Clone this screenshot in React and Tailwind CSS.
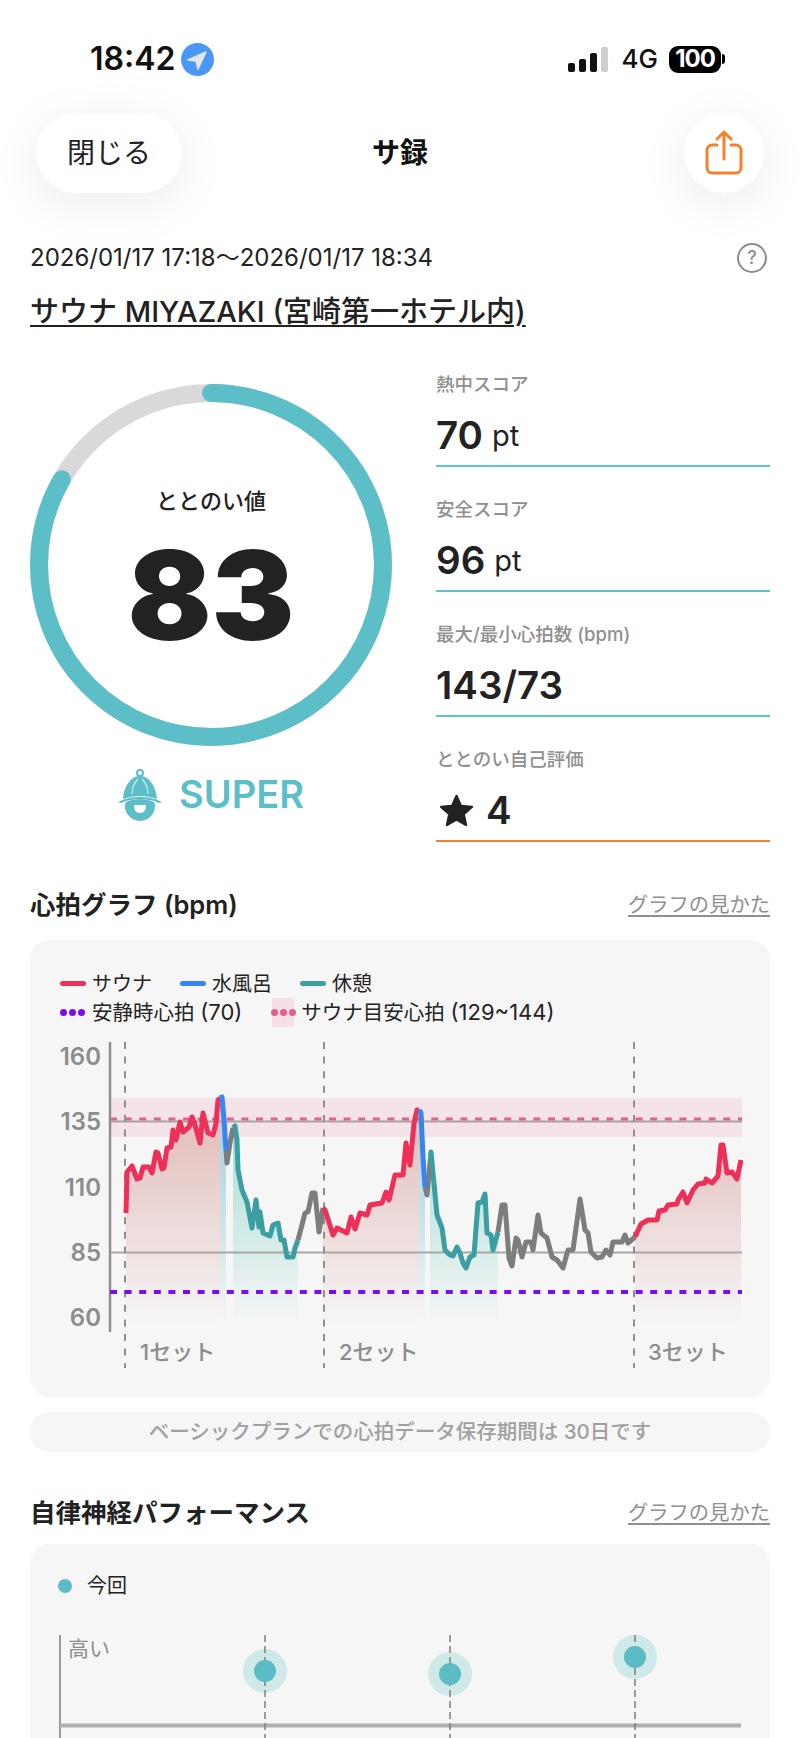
import React from 'react';

const P = {
  red1: [[126,1213],[127,1172],[132,1166],[137,1179],[140,1178],[143,1167],[149,1167],[152,1173],[156,1152],[158,1153],[162,1169],[164,1168],[167,1148],[171,1147],[173,1130],[176,1140],[180,1122],[183,1132],[189,1127],[192,1117],[195,1125],[200,1143],[203,1113],[208,1133],[213,1135],[216,1123],[218,1100],[220,1098]],
  blue1: [[220,1098],[222,1097],[224,1120],[226,1150]],
  gray1: [[226,1150],[227,1163],[230,1143],[233,1128]],
  teal1: [[233,1128],[235,1126],[237,1140],[238,1170],[242,1190],[247,1202],[252,1228],[256,1200],[259,1227],[260,1212],[263,1233],[270,1236],[273,1225],[278,1223],[281,1240],[284,1240],[287,1257],[293,1257],[295,1248],[298,1240]],
  gray2: [[298,1240],[302,1225],[305,1213],[308,1212],[312,1193],[315,1193],[319,1232],[323,1208]],
  red2: [[323,1208],[325,1210],[333,1235],[337,1228],[347,1233],[351,1217],[355,1229],[360,1213],[367,1215],[370,1205],[382,1203],[386,1192],[389,1200],[395,1175],[403,1175],[406,1143],[410,1165],[414,1123],[417,1110],[419,1110]],
  blue2: [[419,1110],[421,1113],[423,1157],[425,1187]],
  gray3: [[425,1187],[427,1195],[430,1163]],
  teal2: [[430,1163],[431,1152],[437,1215],[442,1228],[445,1250],[450,1255],[453,1256],[457,1247],[460,1253],[463,1263],[466,1268],[470,1257],[474,1255],[478,1203],[482,1202],[485,1194],[487,1233],[491,1235],[493,1250],[498,1232]],
  gray4: [[498,1232],[502,1205],[505,1205],[509,1258],[512,1266],[516,1238],[518,1240],[522,1257],[526,1242],[531,1242],[533,1250],[538,1215],[541,1233],[547,1238],[552,1257],[557,1260],[563,1268],[568,1250],[573,1250],[580,1199],[585,1230],[588,1233],[591,1252],[597,1258],[602,1257],[606,1250],[610,1255],[613,1242],[622,1242],[625,1235],[628,1243],[635,1237]],
  red3: [[635,1237],[641,1224],[648,1220],[657,1220],[659,1211],[665,1210],[668,1205],[677,1204],[678,1200],[683,1192],[687,1203],[693,1190],[698,1184],[705,1183],[706,1179],[712,1183],[718,1176],[721,1145],[723,1145],[727,1173],[732,1172],[737,1179],[741,1160]],
};

const toLine = (pts) => pts.map((p) => p.join(',')).join(' ');
const toArea = (pts, bottom = 1325) => `${pts[0][0]},${bottom} ${toLine(pts)} ${pts[pts.length - 1][0]},${bottom}`;

function HeartChart() {
  const labels = [['160', 1065], ['135', 1130], ['110', 1196], ['85', 1261], ['60', 1326]];
  return (
    <svg viewBox="30 1030 740 345" className="block w-[740px] h-[345px] mt-[3px]">
      <defs>
        <linearGradient id="redFill" gradientUnits="userSpaceOnUse" x1="0" y1="1100" x2="0" y2="1325">
          <stop offset="0" stopColor="#dba9a6" stopOpacity="0.8" />
          <stop offset="1" stopColor="#dba9a6" stopOpacity="0" />
        </linearGradient>
        <linearGradient id="tealFill" gradientUnits="userSpaceOnUse" x1="0" y1="1130" x2="0" y2="1325">
          <stop offset="0" stopColor="#a6dcd5" stopOpacity="0.95" />
          <stop offset="1" stopColor="#a6dcd5" stopOpacity="0" />
        </linearGradient>
        <linearGradient id="blueFill" gradientUnits="userSpaceOnUse" x1="0" y1="1100" x2="0" y2="1325">
          <stop offset="0" stopColor="#9ccfdf" stopOpacity="1" />
          <stop offset="1" stopColor="#9ccfdf" stopOpacity="0" />
        </linearGradient>
      </defs>

      <polygon points={toArea(P.red1)} fill="url(#redFill)" />
      <polygon points={toArea(P.red2)} fill="url(#redFill)" />
      <polygon points={toArea(P.red3)} fill="url(#redFill)" />
      <polygon points={toArea(P.blue1)} fill="url(#blueFill)" />
      <polygon points={toArea(P.blue2)} fill="url(#blueFill)" />
      <polygon points={toArea(P.teal1)} fill="url(#tealFill)" />
      <polygon points={toArea(P.teal2)} fill="url(#tealFill)" />

      <rect x="110" y="1098" width="632" height="39" fill="#f0c5d2" fillOpacity="0.36" />
      <line x1="110" x2="742" y1="1121.5" y2="1121.5" stroke="#a3a3a3" strokeWidth="2" />
      <line x1="110" x2="742" y1="1252.5" y2="1252.5" stroke="#a8a8a8" strokeWidth="2" />
      <line x1="110" x2="742" y1="1119" y2="1119" stroke="#e4608c" strokeWidth="3" strokeDasharray="7 7.6" />
      <line x1="110" x2="110" y1="1042" y2="1332" stroke="#8f8f8f" strokeWidth="2.5" />

      {[125, 324, 634].map((x) => (
        <line key={x} x1={x} x2={x} y1="1042" y2="1368" stroke="#8f8f8f" strokeWidth="2" strokeDasharray="7 7.6" />
      ))}

      <g fill="none" strokeWidth="5" strokeLinejoin="round" strokeLinecap="butt">
        <polyline points={toLine(P.gray1)} stroke="#7d7d7d" />
        <polyline points={toLine(P.gray2)} stroke="#7d7d7d" />
        <polyline points={toLine(P.gray3)} stroke="#7d7d7d" />
        <polyline points={toLine(P.gray4)} stroke="#7d7d7d" />
        <polyline points={toLine(P.teal1)} stroke="#3b9ea3" />
        <polyline points={toLine(P.teal2)} stroke="#3b9ea3" />
        <polyline points={toLine(P.red1)} stroke="#ee2f57" />
        <polyline points={toLine(P.red2)} stroke="#ee2f57" />
        <polyline points={toLine(P.red3)} stroke="#ee2f57" />
        <polyline points={toLine(P.blue1)} stroke="#3585f5" />
        <polyline points={toLine(P.blue2)} stroke="#3585f5" />
      </g>

      <line x1="110" x2="742" y1="1292" y2="1292" stroke="#7a0cf0" strokeWidth="4" strokeDasharray="7 7.6" />

      {labels.map(([t, y]) => (
        <text key={t} x="101" y={y} textAnchor="end" fontSize="24" fontWeight="600" fill="#8c8c8c">{t}</text>
      ))}
      <text x="140" y="1360" fontSize="22" fontWeight="500" fill="#8c8c8c">1セット</text>
      <text x="339" y="1360" fontSize="22" fontWeight="500" fill="#8c8c8c">2セット</text>
      <text x="648" y="1360" fontSize="22" fontWeight="500" fill="#8c8c8c">3セット</text>
    </svg>
  );
}

function NerveChart() {
  const pts = [[265, 1671], [450, 1674], [635, 1657]];
  return (
    <svg viewBox="30 1630 740 108" className="block w-[740px] h-[108px] mt-[27px]">
      <line x1="60" x2="60" y1="1635" y2="1738" stroke="#9a9a9a" strokeWidth="2" />
      <line x1="60" x2="741" y1="1725.5" y2="1725.5" stroke="#b0b0b0" strokeWidth="4" />
      {pts.map(([x, y]) => (
        <g key={x}>
          <circle cx={x} cy={y} r="22" fill="#cfe9e9" />
          <line x1={x} x2={x} y1="1635" y2="1738" stroke="#7c7c7c" strokeWidth="1.5" strokeDasharray="7 4" />
          <circle cx={x} cy={y} r="11" fill="#5bbcc5" />
        </g>
      ))}
      <text x="68" y="1656" fontSize="21" fill="#8c8c8c">高い</text>
    </svg>
  );
}

function Metric({ label, children, orange }) {
  return (
    <div className="h-[125px] flex flex-col">
      <div className="h-[24px] flex items-center text-[18.5px] leading-none font-medium text-[#8f8f8f] whitespace-nowrap">{label}</div>
      <div className="h-[60px] mt-[9px] flex items-center text-[38.5px] leading-none font-semibold text-[#222222]">{children}</div>
      <div className={`h-[2px] ${orange ? 'bg-[#f5822a]' : 'bg-[#62c2c6]'}`} />
    </div>
  );
}

function DashLegend({ colour }) {
  return (
    <div className="flex gap-[2px]">
      <span className={`w-[7px] h-[7px] rounded-full ${colour}`} />
      <span className={`w-[7px] h-[7px] rounded-full ${colour}`} />
      <span className={`w-[7px] h-[7px] rounded-full ${colour}`} />
    </div>
  );
}

function LineLegend({ colour, text }) {
  return (
    <div className="flex items-center gap-[6px]">
      <span className={`w-[26px] h-[5px] rounded-full ${colour}`} />
      <span>{text}</span>
    </div>
  );
}

function SectionHead({ title }) {
  return (
    <div className="h-[32px] flex items-center justify-between px-[30px]">
      <h2 className="text-[25.5px] leading-none font-semibold text-[#222222]">{title}</h2>
      <a className="text-[20.3px] leading-none text-[#8f8f8f] underline underline-offset-[3px]">グラフの見かた</a>
    </div>
  );
}

export default function App() {
  return (
    <div className="w-[800px] h-[1738px] overflow-hidden bg-white text-[#222222] [font-family:Inter,'Noto_Sans_CJK_JP',sans-serif]">
      {/* status bar */}
      <div className="pt-[42px] pl-[90px] pr-[75px] h-[76px] flex items-center justify-between">
        <div className="flex items-center gap-[6px]">
          <span className="text-[32px] leading-none font-semibold text-[#111111]">18:42</span>
          <svg viewBox="0 0 33 33" className="w-[33px] h-[33px]">
            <circle cx="16.5" cy="16.5" r="16.5" fill="#4a98f5" />
            <polygon points="25,9 7,17 15,18 17,26" fill="#e4e6ea" stroke="#e4e6ea" strokeWidth="1.5" strokeLinejoin="round" />
          </svg>
        </div>
        <div className="flex items-center">
          <div className="flex items-end gap-[4px] h-[25px]">
            <span className="w-[7px] h-[9px] rounded-[2px] bg-[#111111]" />
            <span className="w-[7px] h-[13px] rounded-[2px] bg-[#111111]" />
            <span className="w-[7px] h-[19px] rounded-[2px] bg-[#111111]" />
            <span className="w-[7px] h-[25px] rounded-[2px] bg-[#cfcfcf]" />
          </div>
          <span className="ml-[14px] text-[26px] leading-none font-medium text-[#111111]">4G</span>
          <div className="ml-[11px] w-[52px] h-[27px] rounded-[9px] bg-black flex items-center justify-center text-white text-[24px] font-bold leading-none tracking-[-1px]">100</div>
          <span className="ml-[1px] w-[3px] h-[10px] rounded-r-full bg-black" />
        </div>
      </div>

      {/* nav */}
      <div className="mt-[37px] px-[36px] h-[80px] flex items-center">
        <div className="flex-1 flex justify-start">
          <button className="w-[146px] h-[80px] rounded-[40px] bg-white shadow-[0_10px_50px_rgba(0,0,0,0.08)] text-[28px] leading-none text-[#222222]">閉じる</button>
        </div>
        <h1 className="text-[28px] leading-none font-bold text-[#111111]">サ録</h1>
        <div className="flex-1 flex justify-end">
          <button className="w-[80px] h-[80px] rounded-full bg-white shadow-[0_10px_50px_rgba(0,0,0,0.08)] flex items-center justify-center">
            <svg viewBox="0 0 40 48" className="w-[40px] h-[48px]" fill="none" stroke="#f5822a" strokeWidth="3" strokeLinecap="round" strokeLinejoin="round">
              <path d="M13 16H8a5 5 0 0 0-5 5v18a5 5 0 0 0 5 5h24a5 5 0 0 0 5-5V21a5 5 0 0 0-5-5h-5" />
              <path d="M20 30V3M13 10l7-7 7 7" />
            </svg>
          </button>
        </div>
      </div>

      {/* date */}
      <div className="mt-[50px] px-[30px] h-[30px] flex items-center justify-between">
        <span className="text-[24px] leading-none text-[#222222] whitespace-nowrap">2026/01/17 17:18〜2026/01/17 18:34</span>
        <span className="mr-[3px] w-[30px] h-[30px] rounded-full border-[2.5px] border-[#8c8c8c] flex items-center justify-center text-[18px] leading-none font-medium text-[#8c8c8c]">?</span>
      </div>

      {/* title */}
      <div className="mt-[21px] px-[30px] h-[34px] flex items-center">
        <span className="text-[29px] leading-none font-medium underline underline-offset-[3px] decoration-2 whitespace-nowrap">サウナ MIYAZAKI (宮崎第一ホテル内)</span>
      </div>

      {/* score */}
      <div className="mt-[44px] pl-[30px] pr-[30px] flex">
        <div className="w-[362px] mt-[12px] flex flex-col items-center">
          <div className="relative w-[362px] h-[362px]">
            <svg viewBox="0 0 362 362" className="w-[362px] h-[362px]">
              <circle cx="181" cy="181" r="172" fill="none" stroke="#d9d9d9" strokeWidth="18" />
              <circle cx="181" cy="181" r="172" fill="none" stroke="#5cbfc7" strokeWidth="18" strokeLinecap="round" pathLength="100" strokeDasharray="83.3 100" transform="rotate(-90 181 181)" />
            </svg>
            <div className="absolute inset-0 flex flex-col items-center">
              <span className="mt-[104px] text-[22px] leading-[26px] font-medium">ととのい値</span>
              <span className="mt-[16px] text-[124px] leading-[130px] font-black text-[#222222]">83</span>
            </div>
          </div>
          <div className="mt-[22px] flex items-center gap-[17px] h-[52px]">
            <svg viewBox="0 0 44 54" className="w-[44px] h-[54px]">
              <circle cx="22" cy="6" r="3" fill="none" stroke="#5cbfc7" strokeWidth="2" />
              <path d="M5 32C6 19 13 9 22 9s16 10 17 23c-6-2-11-3-17-3S11 30 5 32Z" fill="#5cbfc7" />
              <path d="M14 27c0-6 2-11 6-15M30 27c0-6-2-11-6-15" fill="none" stroke="#ffffff" strokeWidth="1.2" opacity="0.7" />
              <path d="M0 35c8-4 14-5 22-5s14 1 22 5l-3 1c-7-3-12-4-19-4S10 33 3 36Z" fill="#5cbfc7" />
              <path d="M8 35c4-2 9-3 14-3s10 1 14 3c1 2 1 3 1 4a15 15 0 0 1-30 0c0-1 0-2 1-4Z" fill="#5cbfc7" />
              <path d="M16 38h12c0 5-2 8-6 8s-6-3-6-8Z" fill="#ffffff" />
            </svg>
            <span className="text-[38px] leading-none font-semibold text-[#5cbfc7]">SUPER</span>
          </div>
        </div>
        <div className="ml-[44px] w-[334px] flex flex-col">
          <Metric label="熱中スコア">70<span className="ml-[9px] text-[29px] font-normal">pt</span></Metric>
          <Metric label="安全スコア">96<span className="ml-[9px] text-[29px] font-normal">pt</span></Metric>
          <Metric label="最大/最小心拍数 (bpm)">143/73</Metric>
          <Metric label="ととのい自己評価" orange>
            <svg viewBox="0 0 24 24" className="ml-[2px] w-[37px] h-[37px]" fill="#222222" stroke="#222222" strokeWidth="1.5" strokeLinejoin="round">
              <polygon points="12,2.5 14.9,9 22,9.7 16.7,14.4 18.2,21.4 12,17.8 5.8,21.4 7.3,14.4 2,9.7 9.1,9" />
            </svg>
            <span className="ml-[11px]">4</span>
          </Metric>
        </div>
      </div>

      {/* heart rate */}
      <div className="mt-[17px]"><SectionHead title="心拍グラフ (bpm)" /></div>
      <div className="mt-[19px] mx-[30px] h-[457px] rounded-[20px] bg-[#f6f6f6] flex flex-col">
        <div className="pt-[29px] pl-[30px] text-[20px] leading-none text-[#222222] whitespace-nowrap">
          <div className="h-[29px] flex items-center gap-[28px]">
            <LineLegend colour="bg-[#ee2f57]" text="サウナ" />
            <LineLegend colour="bg-[#3585f5]" text="水風呂" />
            <LineLegend colour="bg-[#3b9ea3]" text="休憩" />
          </div>
          <div className="h-[29px] flex items-center">
            <DashLegend colour="bg-[#7a0cf0]" />
            <span className="ml-[7px] text-[20.5px]">安静時心拍 <span className="text-[22px]">(70)</span></span>
            <div className="ml-[30px] w-[22px] h-[29px] bg-[#f6dfe6] flex items-center justify-center">
              <div className="shrink-0"><DashLegend colour="bg-[#e4608c]" /></div>
            </div>
            <span className="ml-[7px] text-[20.5px]">サウナ目安心拍 <span className="text-[22px]">(129~144)</span></span>
          </div>
        </div>
        <HeartChart />
      </div>

      <div className="mt-[15px] mx-[30px] h-[40px] rounded-[20px] bg-[#f6f6f6] flex items-center justify-center text-[20.5px] leading-none font-medium text-[#a0a0a0]">
        ベーシックプランでの心拍データ保存期間は 30日です
      </div>

      {/* nerve */}
      <div className="mt-[45px]"><SectionHead title="自律神経パフォーマンス" /></div>
      <div className="mt-[15px] mx-[30px] h-[194px] rounded-t-[20px] bg-[#f6f6f6] overflow-hidden">
        <div className="pt-[25px] pl-[28px] h-[59px] flex items-center gap-[15px] text-[20px] leading-none text-[#222222]">
          <span className="w-[14px] h-[14px] rounded-full bg-[#5bbcc5]" />
          <span>今回</span>
        </div>
        <NerveChart />
      </div>
    </div>
  );
}
